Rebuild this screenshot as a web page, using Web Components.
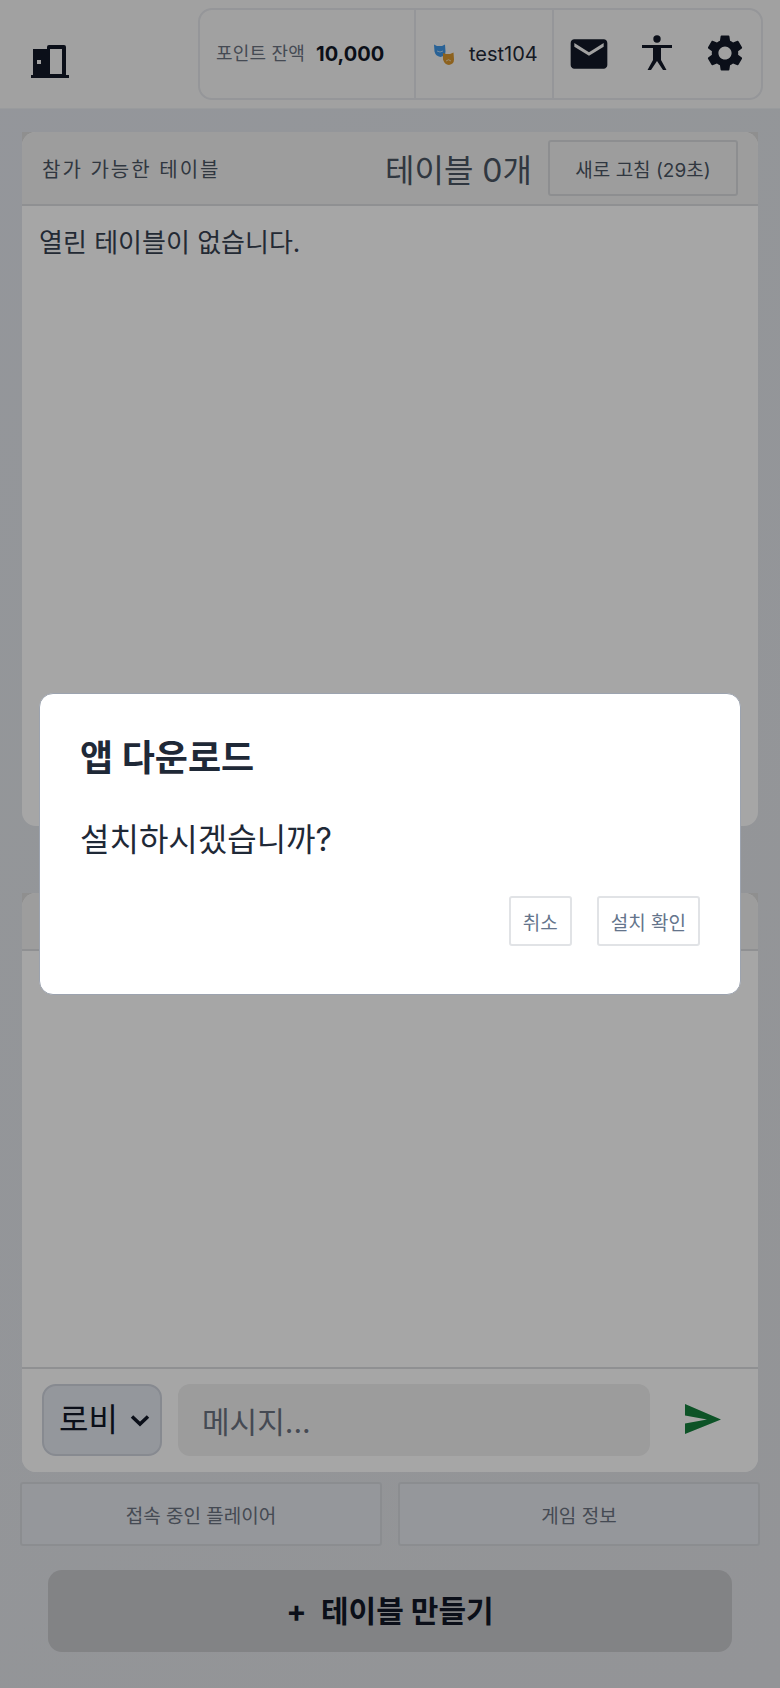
<!DOCTYPE html>
<html lang="ko"><head><meta charset="utf-8">
<style>
html,body{margin:0;height:100%}
body{width:780px;height:1688px;overflow:hidden;background:linear-gradient(135deg,#e3e7ee,#e2e4e8);font-family:Inter,"Noto Sans CJK JP",sans-serif;color:#1f2937}
</style></head><body>
<app-header></app-header>
<lobby-card></lobby-card>
<chat-card></chat-card>
<bottom-actions></bottom-actions>
<install-modal></install-modal>
<script>
function def(name,html){customElements.define(name,class extends HTMLElement{constructor(){super();this.attachShadow({mode:'open'}).innerHTML=html}})}
def('app-header',`<style>
:host{display:flex;box-sizing:border-box;height:109px;background:#f8f8f8;border-bottom:1px solid #eceef1;padding:8px 17px 8px 0;align-items:stretch;justify-content:space-between}
.door{margin:28px 0 0 28px;width:44px;height:44px}
.group{display:flex;width:565px;height:92px;box-sizing:border-box;border:2px solid #e5e7eb;border-radius:14px}
.pts{width:216px;display:flex;align-items:center;padding:0 0 0 16px;box-sizing:border-box;border-right:2px solid #e5e7eb;gap:11px;white-space:nowrap}
.pts span{font-size:18px;color:#6b7280;line-height:26px;letter-spacing:.2px}
.pts b{font-size:20px;color:#111827;line-height:28px;font-weight:700}
.user{width:138px;box-sizing:border-box;border-right:2px solid #e5e7eb;display:flex;padding:0 0 0 18px;align-items:center;gap:14px}
.user span{font-size:20px;color:#1f2937;line-height:30px}
.icons{display:flex;flex:1;padding:0 0 0 13px;gap:24px;align-items:flex-start}
svg{display:block}
</style>
<svg class="door" viewBox="0 0 44 44"><path fill="#111827" fill-rule="evenodd" d="M3 42V39H5V13H19V11Q19 9 21 9H36Q38 9 38 11V39H41V42ZM22 13V38H34V13ZM9 24V28H13V24Z"/></svg>
<div class="group">
<div class="pts"><span>포인트 잔액</span><b>10,000</b></div>
<div class="user"><svg width="21" height="21" viewBox="0 0 21 21"><path fill="#3f97e6" d="M0 .5l3 1.500h5l3-1.500.5 7q0 4.500-5 5.500-5-1-6-5.500z"/><path fill="#d9972f" d="M9 9l3 1h4l3.500-1.500.5 7q0 4.500-5 5.500-4.500-.5-6-5.500z"/><path d="M3 7q3 2 6 0M12 17q2.500-2.500 5 0" stroke="#fff" fill="none" stroke-width="1" opacity=".6"/></svg><span>test104</span></div>
<div class="icons">
<svg style="margin-top:22px" width="44" height="44" viewBox="0 0 24 24"><path fill="#111827" d="M20 4H4c-1.100 0-2 .9-2 2v12c0 1.100.9 2 2 2h16c1.100 0 2-.9 2-2V6c0-1.100-.9-2-2-2zm0 4-8 5-8-5V6l8 5 8-5v2z"/></svg>
<svg style="margin-top:21px" width="44" height="44" viewBox="0 0 44 44"><circle cx="22" cy="8" r="3.700" fill="#111827"/><path fill="#111827" d="M7 14H37V17H26V29L31.500 39H28L22 30 16 39H12.500L18 29V17H7Z"/></svg>
<svg style="margin-top:21px" width="44" height="44" viewBox="0 0 24 24"><path fill="#111827" d="M19.140 12.940c.04-.3.060-.61.060-.94 0-.32-.02-.64-.07-.94l2.030-1.580a.490.490 0 0 0 .120-.610l-1.920-3.320a.488.488 0 0 0-.590-.220l-2.390.960c-.5-.380-1.030-.700-1.620-.940l-.36-2.540a.484.484 0 0 0-.480-.410h-3.840c-.240 0-.430.170-.470.410l-.36 2.540c-.590.240-1.130.570-1.620.940l-2.390-.960c-.220-.080-.470 0-.590.220L2.740 8.870c-.120.210-.080.470.120.610l2.030 1.580c-.050.300-.090.630-.090.940s.020.640.070.940l-2.030 1.580a.490.490 0 0 0-.120.610l1.920 3.320c.120.220.370.290.590.220l2.390-.960c.5.380 1.030.700 1.620.940l.36 2.540c.05.240.240.410.480.410h3.840c.240 0 .440-.170.470-.410l.36-2.540c.590-.240 1.130-.560 1.620-.940l2.390.960c.220.080.470 0 .590-.220l1.920-3.320c.120-.220.070-.470-.120-.610l-2.010-1.580zM12 15.600c-1.980 0-3.600-1.620-3.600-3.600s1.620-3.600 3.600-3.600 3.600 1.620 3.600 3.600-1.620 3.600-3.600 3.600z"/></svg>
</div></div>`);
def('lobby-card',`<style>
:host{display:block;margin:23px 22px 0;height:694px;background:linear-gradient(#dcdcdc 20px,transparent 20px)}
.c0{height:100%;background:#fff;border-radius:14px;overflow:hidden}
header{height:74px;box-sizing:border-box;background:#f2f2f2;border-bottom:2px solid #dcdee1;display:flex;align-items:center;padding:0 20px 0 20px}
h2{margin:0;font-weight:400;font-size:20px;letter-spacing:2px;color:#4b5563;flex:1}
.c{font-size:32px;color:#4b5563;margin-right:16px}
button{all:unset;box-sizing:border-box;width:190px;height:56px;border:2px solid #d9dbde;border-radius:3px;font-size:19px;color:#4b5563;text-align:center}
p{margin:18px 0 0 17px;font-size:26px;line-height:38px;color:#374151}
</style><div class="c0"><header><h2>참가 가능한 테이블</h2><span class="c">테이블 0개</span><button>새로 고침 (29초)</button></header><p>열린 테이블이 없습니다.</p></div>`);
def('chat-card',`<style>
:host{display:block;margin:67px 22px 0;height:579px;background:linear-gradient(#dcdcdc 20px,transparent 20px)}
.c0{display:flex;flex-direction:column;height:100%;background:#fff;border-radius:14px;overflow:hidden}
header{height:58px;flex:none;box-sizing:border-box;background:#f2f2f2;border-bottom:2px solid #dcdee1}
main{flex:1}
footer{height:105px;flex:none;box-sizing:border-box;border-top:2px solid #dcdee1;display:flex;padding:15px 20px 0;gap:16px;background:#fff}
.sel{box-sizing:border-box;width:120px;height:72px;border:2px solid #cfd4de;border-radius:14px;background:#e4e8f0;font-size:32px;color:#111827;display:flex;align-items:center;padding-left:15px;gap:12px;line-height:1}
.inp{box-sizing:border-box;width:472px;height:72px;border-radius:12px;background:#f0f0f0;font-size:30px;color:#6b7280;display:flex;align-items:center;padding-left:24px}
.send{margin:20px 0 0 19px}
</style><div class="c0"><header></header><main></main><footer>
<div class="sel"><span>로비</span><svg width="20" height="20" viewBox="0 0 20 20"><path d="M2 6.500l8 7.500 8-7.500" fill="none" stroke="#111827" stroke-width="3.500"/></svg></div>
<div class="inp">메시지...</div>
<svg class="send" width="36" height="31" viewBox="0 0 36 31"><path fill="#15803d" d="M0 0l36 15.500L0 30V19.500L22 15.500 0 11.500z"/></svg>
</footer></div>`);
def('bottom-actions',`<style>
:host{display:block;padding:0 20px}
.row{display:flex;gap:16px;margin-top:10px}
button{all:unset;box-sizing:border-box;flex:1;height:64px;border:2px solid #d6d9de;border-radius:3px;font-size:19px;color:#6b7280;text-align:center;background:#e5e8ee}
.big{display:block;box-sizing:border-box;height:82px;width:684px;margin:24px 0 0 28px;border-radius:14px;background:#c8c9cc;font-size:30px;font-weight:700;color:#111827;text-align:center;line-height:82px}
</style><div class="row"><button>접속 중인 플레이어</button><button>게임 정보</button></div><div class="big">+&nbsp; 테이블 만들기</div>`);
def('install-modal',`<style>
:host{position:fixed;inset:0;display:flex;align-items:center;justify-content:center;background:rgba(0,0,0,.35)}
.m{box-sizing:border-box;width:702px;height:302px;background:#fff;border:1px solid #9ca3af;border-radius:14px;padding:38px 40px 0;display:flex;flex-direction:column}
h3{margin:0;font-size:36px;line-height:52px;font-weight:700;color:#1f2937}
p{margin:32px 0 0;font-size:32px;line-height:48px;color:#1f2937}
.a{display:flex;justify-content:flex-end;gap:25px;margin-top:32px}
button{all:unset;box-sizing:border-box;height:50px;border:2px solid #e1e3e6;border-radius:3px;font-size:19px;color:#64748b;padding:0 12px;text-align:center}
</style><div class="m"><h3>앱 다운로드</h3><p>설치하시겠습니까?</p><div class="a"><button>취소</button><button>설치 확인</button></div></div>`);
</script>
</body></html>
